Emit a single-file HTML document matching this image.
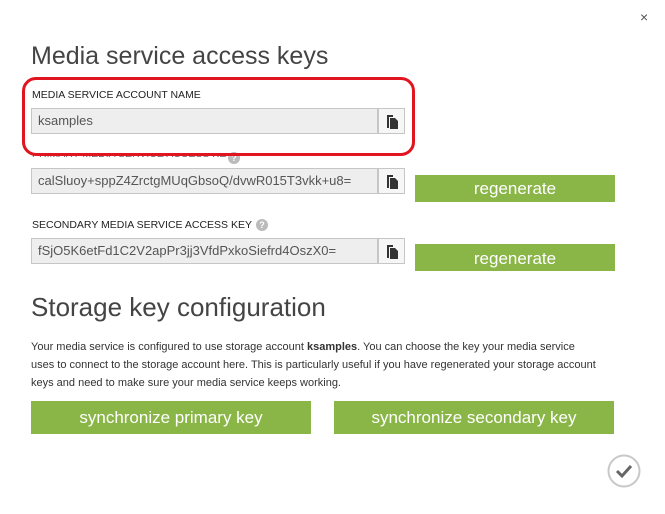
<!DOCTYPE html>
<html><head><meta charset="utf-8"><style>
body{margin:0;width:665px;height:514px;background:#fff;font-family:"Liberation Sans",sans-serif;position:relative;overflow:hidden;color:#333}
.a{position:absolute}
h1{position:absolute;margin:0;font-weight:normal;font-size:25px;color:#444}
.lbl{position:absolute;font-size:10.5px;color:#222;white-space:nowrap}
.inp{position:absolute;left:31px;width:347px;background:#eee;border:1px solid #c6c6c6;font-size:13px;color:#555;box-sizing:border-box;padding-left:6px}
.cp{position:absolute;left:378px;width:27px;border:1px solid #c6c6c6;background:#f6f6f6;box-sizing:border-box}
.btn{position:absolute;background:#8ab547;color:#fff;text-align:center;font-size:17px;box-sizing:border-box}
.q{display:inline-block;width:12px;height:12px;border-radius:50%;background:#bbb;color:#fff;font-size:9px;text-align:center;line-height:12px;font-weight:bold;vertical-align:middle;margin-left:4px}
</style></head><body>
<div class="a" style="left:640px;top:9px;font-size:14px;color:#555">×</div>
<h1 style="left:31px;top:42px">Media service access keys</h1>
<div class="lbl" style="left:32px;top:154px;color:#666;overflow:hidden;height:5px;line-height:0px">PRIMARY MEDIA SERVICE ACCESS KEY</div>
<div class="a" style="left:228px;top:149px"><span class="q" style="margin:0">?</span></div>
<div class="a" style="left:22px;top:77px;width:387px;height:73px;border:3px solid #e0151f;border-radius:14px;background:transparent"></div>
<div class="lbl" style="left:32px;top:89px">MEDIA SERVICE ACCOUNT NAME</div>
<div class="inp" style="top:108px;height:26px;line-height:24px">ksamples</div>
<div class="cp" style="top:108px;height:26px"><svg width="25" height="24"><path d="M8 6h6l0 2h-4v11h-2z M11 9h5l3 3v8h-8z" fill="#333"/></svg></div>
<div class="inp" style="top:168px;height:26px;line-height:24px">calSluoy+sppZ4ZrctgMUqGbsoQ/dvwR015T3vkk+u8=</div>
<div class="cp" style="top:168px;height:26px"><svg width="25" height="24"><path d="M8 6h6l0 2h-4v11h-2z M11 9h5l3 3v8h-8z" fill="#333"/></svg></div>
<div class="btn" style="left:415px;top:175px;width:200px;height:27px;line-height:28px">regenerate</div>
<div class="lbl" style="left:32px;top:219px">SECONDARY MEDIA SERVICE ACCESS KEY<span class="q">?</span></div>
<div class="inp" style="top:238px;height:26px;line-height:24px">fSjO5K6etFd1C2V2apPr3jj3VfdPxkoSiefrd4OszX0=</div>
<div class="cp" style="top:238px;height:26px"><svg width="25" height="24"><path d="M8 6h6l0 2h-4v11h-2z M11 9h5l3 3v8h-8z" fill="#333"/></svg></div>
<div class="btn" style="left:415px;top:244px;width:200px;height:27px;line-height:30px">regenerate</div>
<h1 style="left:31px;top:292px;font-size:26px">Storage key configuration</h1>
<div class="a" style="left:31px;top:338px;width:570px;font-size:11px;line-height:18px;color:#333">Your media service is configured to use storage account <b>ksamples</b>. You can choose the key your media service uses to connect to the storage account here. This is particularly useful if you have regenerated your storage account keys and need to make sure your media service keeps working.</div>
<div class="btn" style="left:31px;top:401px;width:280px;height:33px;line-height:33px">synchronize primary key</div>
<div class="btn" style="left:334px;top:401px;width:280px;height:33px;line-height:33px">synchronize secondary key</div>
<svg class="a" style="left:606px;top:453px" width="36" height="36"><circle cx="18" cy="18" r="15.5" fill="none" stroke="#c8c8c8" stroke-width="2"/><path d="M11 18l5 5 9-10" fill="none" stroke="#666" stroke-width="3"/></svg>
</body></html>
